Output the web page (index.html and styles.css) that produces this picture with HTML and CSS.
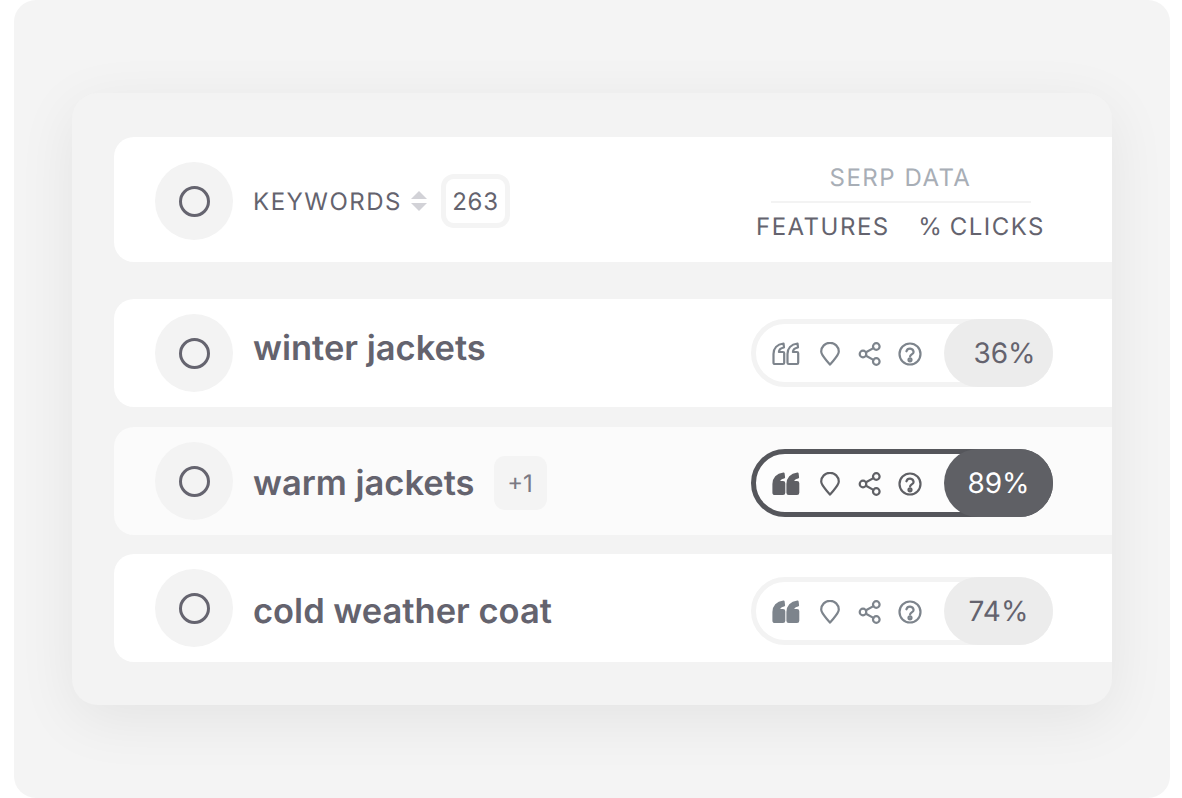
FILE: index.html
```html
<!DOCTYPE html>
<html lang="en">
<head>
<meta charset="utf-8">
<title>Keywords</title>
<link rel="stylesheet" href="styles.css">
</head>
<body>
<svg class="defs" width="0" height="0" aria-hidden="true">
  <symbol id="i-quote" viewBox="0 0 28 24">
    <path d="M1.500 12C1.500 6.500 5 2.300 11.500 1.500l.5 4C8.700 6 7 7.800 6.900 10H11a1.200 1.200 0 0 1 1.200 1.200v9.600A1.200 1.200 0 0 1 11 22H2.700a1.200 1.200 0 0 1-1.200-1.200z"/>
    <path d="M15.500 12C15.500 6.500 19 2.300 25.500 1.500l.5 4C22.700 6 21 7.800 20.900 10H25a1.200 1.200 0 0 1 1.200 1.200v9.600A1.200 1.200 0 0 1 25 22h-8.300a1.200 1.200 0 0 1-1.200-1.200z"/>
  </symbol>
  <symbol id="i-pin" viewBox="0 0 24 24">
    <path d="M12 22.600C8 17.500 3.200 13.500 3.200 9.600a8.800 8.800 0 0 1 17.600 0c0 3.900-4.800 7.900-8.800 13z"/>
  </symbol>
  <symbol id="i-share" viewBox="0 0 24 24">
    <circle cx="18.300" cy="4.500" r="3.300"/>
    <circle cx="5" cy="12" r="3.300"/>
    <circle cx="18.300" cy="19.500" r="3.300"/>
    <path d="M8 10.300l7.400-4.200M8 13.700l7.400 4.200"/>
  </symbol>
  <symbol id="i-help" viewBox="0 0 24 24">
    <circle cx="12" cy="12" r="10.500"/>
    <path class="mark" d="M8.400 9.300a3.700 3.700 0 0 1 7.200 .6c0 2.300-3.500 2.700-3.500 4.600"/>
    <circle class="dot" cx="12" cy="17.800" r="1.500"/>
  </symbol>
</svg>
<main class="panel">
  <section class="card">
    <header class="row head">
      <div class="check check-head"><span class="radio"></span></div>
      <span class="label">KEYWORDS</span>
      <svg class="sort" viewBox="0 0 16 20"><path d="M8 0l8 8H0zM8 20l8-8H0z"/></svg>
      <span class="count">263</span>
      <div class="serp">
        <div class="serp-title">SERP DATA</div>
        <div class="serp-cols"><span>FEATURES</span><span class="clicks">% CLICKS</span></div>
      </div>
    </header>

    <article class="row item first">
      <div class="check"><span class="radio"></span></div>
      <span class="name name-up">winter jackets</span>
      <div class="pill">
        <svg class="icon quote"><use href="#i-quote"/></svg>
        <svg class="icon"><use href="#i-pin"/></svg>
        <svg class="icon"><use href="#i-share"/></svg>
        <svg class="icon"><use href="#i-help"/></svg>
        <span class="pct pct-off">36%</span>
      </div>
    </article>

    <article class="row item alt">
      <div class="check"><span class="radio"></span></div>
      <span class="name name-down">warm jackets</span>
      <span class="tag">+1</span>
      <div class="pill pill-dark">
        <svg class="icon quote filled"><use href="#i-quote"/></svg>
        <svg class="icon"><use href="#i-pin"/></svg>
        <svg class="icon"><use href="#i-share"/></svg>
        <svg class="icon"><use href="#i-help"/></svg>
        <span class="pct">89%</span>
      </div>
    </article>

    <article class="row item last">
      <div class="check"><span class="radio"></span></div>
      <span class="name name-low">cold weather coat</span>
      <div class="pill pill-low">
        <svg class="icon quote filled"><use href="#i-quote"/></svg>
        <svg class="icon"><use href="#i-pin"/></svg>
        <svg class="icon"><use href="#i-share"/></svg>
        <svg class="icon"><use href="#i-help"/></svg>
        <span class="pct">74%</span>
      </div>
    </article>
  </section>
</main>
</body>
</html>
```
FILE: styles.css
```css
* { box-sizing: border-box; }
html, body { margin: 0; height: 100%; background: #fff; overflow: hidden; }
body {
  font-family: Inter, "Liberation Sans", sans-serif;
  color: #64636e;
  text-rendering: geometricPrecision;
}
.defs { position: absolute; }

.panel {
  width: 1156px;
  height: 798px;
  margin-left: 14px;
  padding: 93px 58px 0;
  background: #f4f4f4;
  border-radius: 22px;
}
.card {
  width: 1040px;
  height: 612px;
  padding: 44px 0 0 42px;
  background: #f3f3f3;
  border-radius: 26px;
  box-shadow: 0 14px 60px rgba(0, 0, 0, .07);
}
.row {
  display: flex;
  align-items: center;
  padding-left: 41px;
  background: #fff;
  border-radius: 20px 0 0 20px;
}
.head { height: 125px; margin-bottom: 37px; }
.item { height: 108px; margin-bottom: 20px; padding-right: 59px; }
.last { margin-bottom: 0; margin-top: -1px; }
.alt { background: #fbfbfb; }

.check {
  flex: none;
  width: 78px;
  height: 78px;
  display: flex;
  align-items: center;
  justify-content: center;
  background: #f3f3f3;
  border-radius: 50%;
}
.check-head { margin-top: 3px; }
.radio {
  width: 31px;
  height: 31px;
  border: 3px solid #65646f;
  border-radius: 50%;
}

.label { margin-left: 20px; margin-top: 3px; font-size: 24px; letter-spacing: 1.500px; }
.sort { width: 16px; height: 20px; margin-left: 9px; margin-top: 3px; fill: #d2d2d7; }
.count {
  margin-left: 14px;
  margin-top: 3px;
  width: 69px;
  height: 54px;
  display: flex;
  align-items: center;
  justify-content: center;
  font-size: 24px;
  letter-spacing: .8px;
  border: 5px solid #f4f4f4;
  border-radius: 13px;
}

.serp {
  margin-left: auto;
  margin-right: 67px;
  margin-top: 5px;
  width: 289px;
  display: flex;
  flex-direction: column;
  align-items: center;
}
.serp-title {
  width: 260px;
  padding-bottom: 9px;
  text-align: center;
  font-size: 24px;
  line-height: 29px;
  letter-spacing: 1.500px;
  color: #a8aeb6;
  border-bottom: 2px solid #f3f3f3;
}
.serp-cols {
  width: 100%;
  display: flex;
  justify-content: space-between;
  margin-top: 9px;
  font-size: 24px;
  line-height: 29px;
  letter-spacing: 1.500px;
}
.clicks { word-spacing: -2px; }

.name { margin-left: 20px; font-size: 34.500px; font-weight: 600; line-height: 40px; }
.name-up { padding-bottom: 9px; }
.name-down { padding-top: 5px; }
.name-low { padding-top: 7px; }
.tag {
  margin-left: 19px;
  margin-top: 4px;
  width: 53px;
  height: 54px;
  display: flex;
  align-items: center;
  justify-content: center;
  font-size: 24px;
  color: #7b7a84;
  background: #f4f4f4;
  border-radius: 11px;
}

.pill {
  margin-left: auto;
  width: 302px;
  height: 68px;
  display: flex;
  align-items: center;
  padding-left: 16px;
  background: #fff;
  border: 5px solid #f3f3f3;
  border-radius: 34px;
  color: #7d848c;
}
.pill-dark { margin-top: 4px; border-color: #55565b; color: #5f6065; background: #fdfdfd; }
.pill-low { margin-top: 6px; }
.icon {
  flex: none;
  width: 24px;
  height: 24px;
  margin: 2px 0 0 16px;
  fill: none;
  stroke: currentColor;
  stroke-width: 2.200px;
  stroke-linecap: round;
  stroke-linejoin: round;
}
.icon .dot { fill: currentColor; stroke: none; }
.icon .mark { stroke-width: 2.500px; }
.quote { width: 28px; margin-left: 0; margin-right: 2px; }
.filled { fill: currentColor; }
.pct {
  margin: -5px -5px -5px auto;
  flex: none;
  width: 109px;
  height: 68px;
  display: flex;
  align-items: center;
  justify-content: center;
  font-size: 28px;
  color: #64636e;
  background: #ececec;
  border-radius: 34px;
}
.pct-off { padding-left: 12px; }
.pill-dark .pct { color: #fff; background: #5f6065; }
```
